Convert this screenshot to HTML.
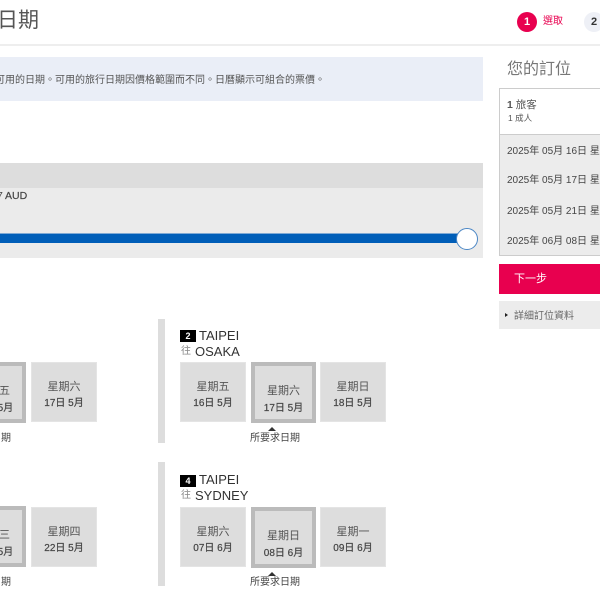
<!DOCTYPE html>
<html lang="zh-Hant"><head><meta charset="utf-8"><title>日期</title>
<style>
html,body{margin:0;padding:0;background:#fff}
#p{position:relative;width:600px;height:600px;overflow:hidden;background:#fff;font-family:"Liberation Sans","WenQuanYi Zen Hei","Noto Sans CJK TC",sans-serif;color:#555}
#p div{position:absolute;white-space:nowrap}
.t{line-height:14px}
.c{background:#ddd;width:66px;height:60px;text-align:center;box-sizing:border-box;border:1px solid #e4e4e4}
.s{background:#ddd;width:65px;height:61px;text-align:center;box-sizing:border-box;border:4px solid #bbb}
.c b,.s b{display:block;font-weight:400;font-size:11px;line-height:15px;color:#555}
.c i,.s i{display:block;font-style:normal;font-size:10px;line-height:15px;color:#444;font-weight:400;-webkit-text-stroke:.2px #444}
.c b{margin-top:17px}.c i{margin-top:1px}
.s b{margin-top:18px}.s i{margin-top:2px}
.n{background:#000;color:#fff;width:16px;height:12px;line-height:12px;font-size:9px;font-weight:700;text-align:center}
.city{font-size:13px;line-height:15px;color:#333}
.to{font-size:10px;line-height:14px;color:#888}
.sep{background:#ddd;width:7px;height:124px;left:158px}
.lab{font-size:10px;line-height:14px;color:#444}
.tri{width:0;height:0;border-left:4px solid transparent;border-right:4px solid transparent;border-bottom:4px solid #333}
.row{font-size:10px;line-height:14px;color:#444;left:507px}
</style></head><body><div id="p">

<div style="left:-3px;top:7px;font-size:21px;line-height:28px;color:#555">日期</div>
<div style="left:0;top:44px;width:600px;height:2px;background:#eee"></div>

<div style="left:517px;top:12px;width:20px;height:20px;border-radius:50%;background:#e8004f;color:#fff;font-size:11px;font-weight:700;line-height:20px;text-align:center">1</div>
<div style="left:543px;top:15px;font-size:10px;line-height:14px;color:#e8004f">選取</div>
<div style="left:584px;top:12px;width:20px;height:20px;border-radius:50%;background:#eef0f6;color:#333;font-size:11px;font-weight:700;line-height:20px;text-align:center">2</div>

<div style="left:0;top:57px;width:483px;height:44px;background:#eaeef7"></div>
<div class="t" style="left:-5px;top:74px;font-size:10px;color:#555">可用的日期。可用的旅行日期因價格範圍而不同。日曆顯示可組合的票價。</div>

<div style="left:0;top:163px;width:483px;height:25px;background:#ddd"></div>
<div style="left:0;top:188px;width:483px;height:70px;background:#ebebeb"></div>
<div class="t" style="left:-3px;top:189px;font-size:10.5px;color:#444;font-weight:400">7</div>
<div class="t" style="left:5px;top:189px;font-size:10.5px;color:#444;-webkit-text-stroke:.2px #444">AUD</div>
<div style="left:0;top:233px;width:460px;height:10px;background:#005eb8;border-top:1px solid #7fa9d4;box-sizing:border-box"></div>
<div style="left:456px;top:228px;width:22px;height:22px;box-sizing:border-box;border-radius:50%;background:#fff;border:1px solid #4a86c5"></div>

<div style="left:507px;top:59px;font-size:16px;line-height:22px;color:#777">您的訂位</div>
<div style="left:499px;top:88px;width:110px;height:168px;box-sizing:border-box;border:1px solid #ccc;background:#ececec"></div>
<div style="left:500px;top:89px;width:100px;height:45px;background:#fff"></div>
<div style="left:500px;top:134px;width:100px;height:1px;background:#ccc"></div>
<div class="t" style="left:507px;top:98px;font-size:10.5px;color:#555"><span style="font-weight:700">1</span> 旅客</div>
<div class="t" style="left:508px;top:111px;font-size:8.5px;color:#555">1 成人</div>
<div class="row" style="top:145px">2025年 05月 16日 星期五</div>
<div class="row" style="top:174px">2025年 05月 17日 星期六</div>
<div class="row" style="top:205px">2025年 05月 21日 星期三</div>
<div class="row" style="top:235px">2025年 06月 08日 星期日</div>
<div style="left:499px;top:264px;width:101px;height:30px;background:#e8004f"></div>
<div style="left:514px;top:271px;font-size:11px;line-height:16px;color:#fff">下一步</div>
<div style="left:499px;top:301px;width:101px;height:28px;background:#ececec"></div>
<div style="left:505px;top:313px;width:0;height:0;border-top:2px solid transparent;border-bottom:2px solid transparent;border-left:3px solid #222"></div>
<div style="left:514px;top:310px;font-size:10px;line-height:14px;color:#666">詳細訂位資料</div>

<div class="sep" style="top:319px"></div>
<div class="sep" style="top:462px"></div>

<!-- left top -->
<div class="s" style="left:-39px;top:362px"><b>星期五</b><i>16日 5月</i></div>
<div class="c" style="left:31px;top:362px"><b>星期六</b><i>17日 5月</i></div>
<div class="lab" style="left:-39px;top:432px">所要求日期</div>

<!-- left bottom -->
<div class="s" style="left:-39px;top:506px"><b>星期三</b><i>21日 5月</i></div>
<div class="c" style="left:31px;top:507px"><b>星期四</b><i>22日 5月</i></div>
<div class="lab" style="left:-39px;top:576px">所要求日期</div>

<!-- right top -->
<div class="n" style="left:180px;top:330px">2</div>
<div class="city" style="left:199px;top:328px">TAIPEI</div>
<div class="to" style="left:181px;top:345px">往</div>
<div class="city" style="left:195px;top:344px">OSAKA</div>
<div class="c" style="left:180px;top:362px"><b>星期五</b><i>16日 5月</i></div>
<div class="s" style="left:251px;top:362px"><b>星期六</b><i>17日 5月</i></div>
<div class="c" style="left:320px;top:362px"><b>星期日</b><i>18日 5月</i></div>
<div class="tri" style="left:268px;top:427px"></div>
<div class="lab" style="left:250px;top:432px">所要求日期</div>

<!-- right bottom -->
<div class="n" style="left:180px;top:475px">4</div>
<div class="city" style="left:199px;top:472px">TAIPEI</div>
<div class="to" style="left:181px;top:489px">往</div>
<div class="city" style="left:195px;top:488px">SYDNEY</div>
<div class="c" style="left:180px;top:507px"><b>星期六</b><i>07日 6月</i></div>
<div class="s" style="left:251px;top:507px"><b>星期日</b><i>08日 6月</i></div>
<div class="c" style="left:320px;top:507px"><b>星期一</b><i>09日 6月</i></div>
<div class="tri" style="left:268px;top:572px"></div>
<div class="lab" style="left:250px;top:576px">所要求日期</div>

</div></body></html>
